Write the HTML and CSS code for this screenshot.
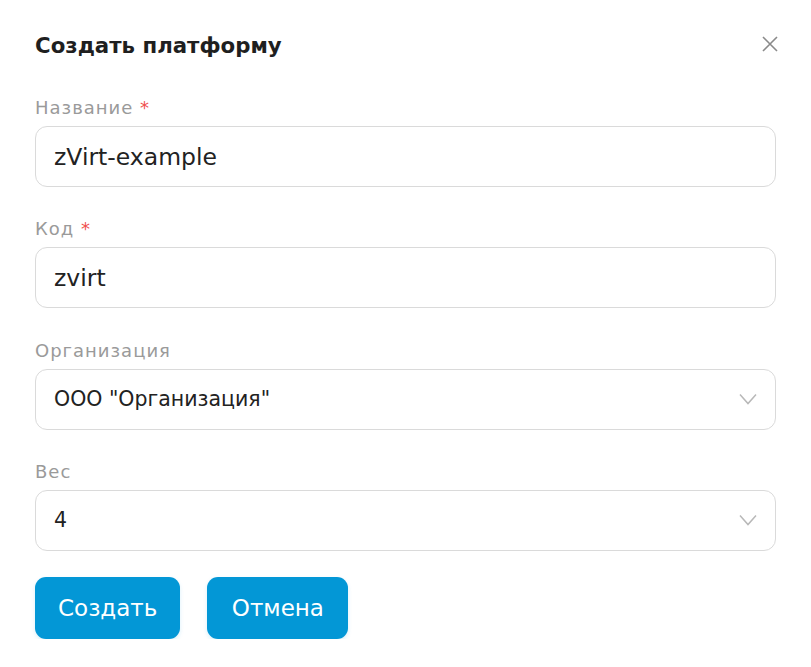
FILE: index.html
```html
<!DOCTYPE html>
<html lang="ru">
<head>
<meta charset="utf-8">
<title>Создать платформу</title>
<link rel="stylesheet" href="styles.css">
</head>
<body>
<div class="modal">
  <div class="modal-header">
    <h1 class="modal-title">Создать платформу</h1>
    <button class="close-btn" type="button" aria-label="Закрыть">
      <svg width="16" height="16" viewBox="0 0 16 16"><path d="M1 1L15 15M15 1L1 15" stroke="#8a8a8a" stroke-width="1.6" fill="none"/></svg>
    </button>
  </div>
  <form class="form">
    <div class="field">
      <label class="label">Название <span class="req">*</span></label>
      <div class="input"><span class="value big">zVirt-example</span></div>
    </div>
    <div class="field">
      <label class="label">Код <span class="req">*</span></label>
      <div class="input"><span class="value big">zvirt</span></div>
    </div>
    <div class="field">
      <label class="label">Организация</label>
      <div class="input select"><span class="value">ООО "Организация"</span>
        <svg class="chev" width="18" height="12" viewBox="0 0 18 12"><path d="M1 1.5L9 10.5L17 1.5" stroke="#b8b8b8" stroke-width="1.5" fill="none"/></svg>
      </div>
    </div>
    <div class="field">
      <label class="label">Вес</label>
      <div class="input select"><span class="value">4</span>
        <svg class="chev" width="18" height="12" viewBox="0 0 18 12"><path d="M1 1.5L9 10.5L17 1.5" stroke="#b8b8b8" stroke-width="1.5" fill="none"/></svg>
      </div>
    </div>
    <div class="actions">
      <button type="button" class="btn">Создать</button>
      <button type="button" class="btn">Отмена</button>
    </div>
  </form>
</div>
</body>
</html>
```
FILE: styles.css
```css
* { box-sizing: border-box; }
html, body { margin: 0; background: #fff; }
body { font-family: "DejaVu Sans", "Noto Sans", sans-serif; color: #222; }
.modal { padding: 31px 35px 0 35px; width: 811px; }
.modal-header { display: flex; justify-content: space-between; align-items: center; height: 30px; }
.modal-title { margin: 0; font-size: 21.3px; font-weight: 700; line-height: 30px; color: #1f1f1f; }
.close-btn { border: 0; background: none; padding: 0; width: 16px; height: 16px; display: flex; margin-top: -5px; margin-right: -2px; cursor: pointer; }
.form { margin-top: 36px; display: flex; flex-direction: column; gap: 31.3px; }
.field { display: flex; flex-direction: column; gap: 7px; }
.label { font-size: 18px; letter-spacing: 1px; line-height: 22px; color: #9a9a9a; }
.req { color: #f0504f; }
.input { height: 61px; border: 1px solid #dadada; border-radius: 12px; display: flex; align-items: center; padding: 0 18px; justify-content: space-between; }
.value { font-size: 20.5px; color: #222; }
.value.big { font-size: 23.5px; }
.actions { display: flex; gap: 27px; margin-top: -5px; }
.btn { height: 62px; border: 0; border-radius: 11px; background: #0397d6; color: #fff; font-family: inherit; font-size: 23px; padding: 0 23px; box-shadow: 0 2px 4px rgba(3,151,214,0.15); }
.btn + .btn { padding: 0 24.5px; }
```
